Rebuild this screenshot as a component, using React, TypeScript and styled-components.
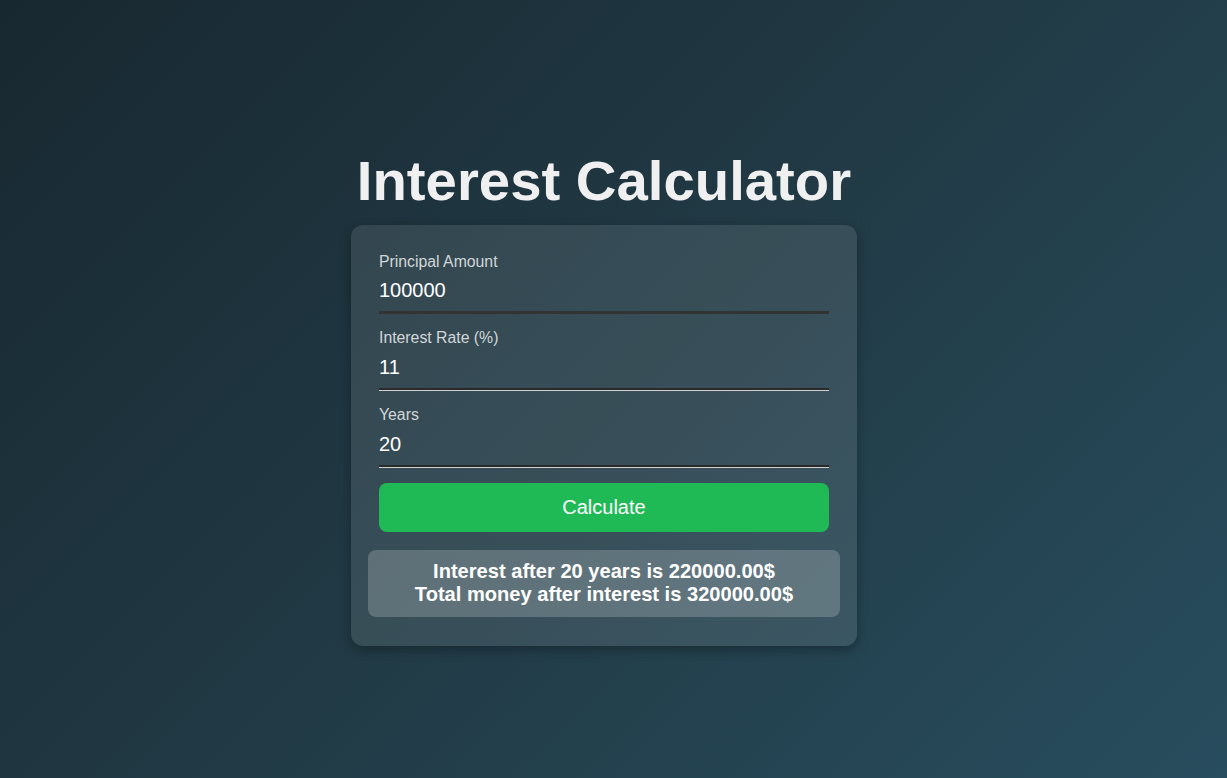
import React, { useState } from "react";
import styled, { createGlobalStyle } from "styled-components";

const GlobalStyle = createGlobalStyle`
  html, body {
    margin: 0;
    padding: 0;
    height: 100%;
  }
  body {
    font-family: "Liberation Sans", Arial, sans-serif;
    background: linear-gradient(135deg, #182830 0%, #213a45 50%, #284d5e 100%);
    background-attachment: fixed;
    min-height: 100vh;
  }
`;

const Page = styled.main`
  box-sizing: border-box;
  min-height: 100vh;
  display: flex;
  flex-direction: column;
  align-items: center;
  justify-content: center;
  padding: 16px 19px 0 0;
`;

const Title = styled.h1`
  margin: 0 0 12px;
  font-size: 56.3px;
  font-weight: 700;
  color: #f0f0f0;
  line-height: normal;
`;

const Card = styled.section`
  box-sizing: border-box;
  width: 506px;
  padding: 28px 28px 29px;
  border-radius: 12px;
  background: rgba(255, 255, 255, 0.1);
  box-shadow: 0 4px 12px rgba(0, 0, 0, 0.3);
  display: flex;
  flex-direction: column;
`;

const Field = styled.div`
  display: flex;
  flex-direction: column;
  margin-bottom: 15px;
`;

const Label = styled.label`
  font-size: 15.8px;
  line-height: 18px;
  color: #d2d6d8;
  margin-bottom: 6px;
`;

const Input = styled.input<{ $focused?: boolean }>`
  box-sizing: border-box;
  height: 37px;
  padding: 2px 0 9px;
  font-family: "Liberation Sans", Arial, sans-serif;
  font-size: 20px;
  line-height: 23px;
  color: #ffffff;
  background: transparent;
  border: none;
  border-bottom: ${(p) => (p.$focused ? "3px solid #333333" : "2px solid #2a2a2a")};
  box-shadow: ${(p) => (p.$focused ? "none" : "0 1px 0 #d0d0d0")};
  margin-bottom: ${(p) => (p.$focused ? "0" : "1px")};
  outline: none;
`;

const Button = styled.button`
  height: 49px;
  border: none;
  border-radius: 8px;
  background: #1fba56;
  color: #ffffff;
  font-family: "Liberation Sans", Arial, sans-serif;
  font-size: 20px;
  cursor: pointer;
`;

const Result = styled.div`
  margin: 18px -11px 0;
  padding: 10px 8px 11px;
  border-radius: 8px;
  background: rgba(255, 255, 255, 0.2);
  color: #ffffff;
  font-size: 20.1px;
  font-weight: 700;
  line-height: 23px;
  text-align: center;
`;

export default function App() {
  const [principal, setPrincipal] = useState("100000");
  const [rate, setRate] = useState("11");
  const [years, setYears] = useState("20");
  const [result, setResult] = useState({ interest: 220000, total: 320000, years: 20 });

  const calculate = () => {
    const p = parseFloat(principal) || 0;
    const r = parseFloat(rate) || 0;
    const y = parseFloat(years) || 0;
    const interest = (p * r * y) / 100;
    setResult({ interest, total: p + interest, years: y });
  };

  return (
    <>
      <GlobalStyle />
      <Page>
        <Title>Interest Calculator</Title>
        <Card>
          <Field>
            <Label htmlFor="principal">Principal Amount</Label>
            <Input id="principal" $focused value={principal} onChange={(e) => setPrincipal(e.target.value)} />
          </Field>
          <Field>
            <Label htmlFor="rate">Interest Rate (%)</Label>
            <Input id="rate" value={rate} onChange={(e) => setRate(e.target.value)} />
          </Field>
          <Field>
            <Label htmlFor="years">Years</Label>
            <Input id="years" value={years} onChange={(e) => setYears(e.target.value)} />
          </Field>
          <Button onClick={calculate}>Calculate</Button>
          <Result>
            Interest after {result.years} years is {result.interest.toFixed(2)}$
            <br />
            Total money after interest is {result.total.toFixed(2)}$
          </Result>
        </Card>
      </Page>
    </>
  );
}
